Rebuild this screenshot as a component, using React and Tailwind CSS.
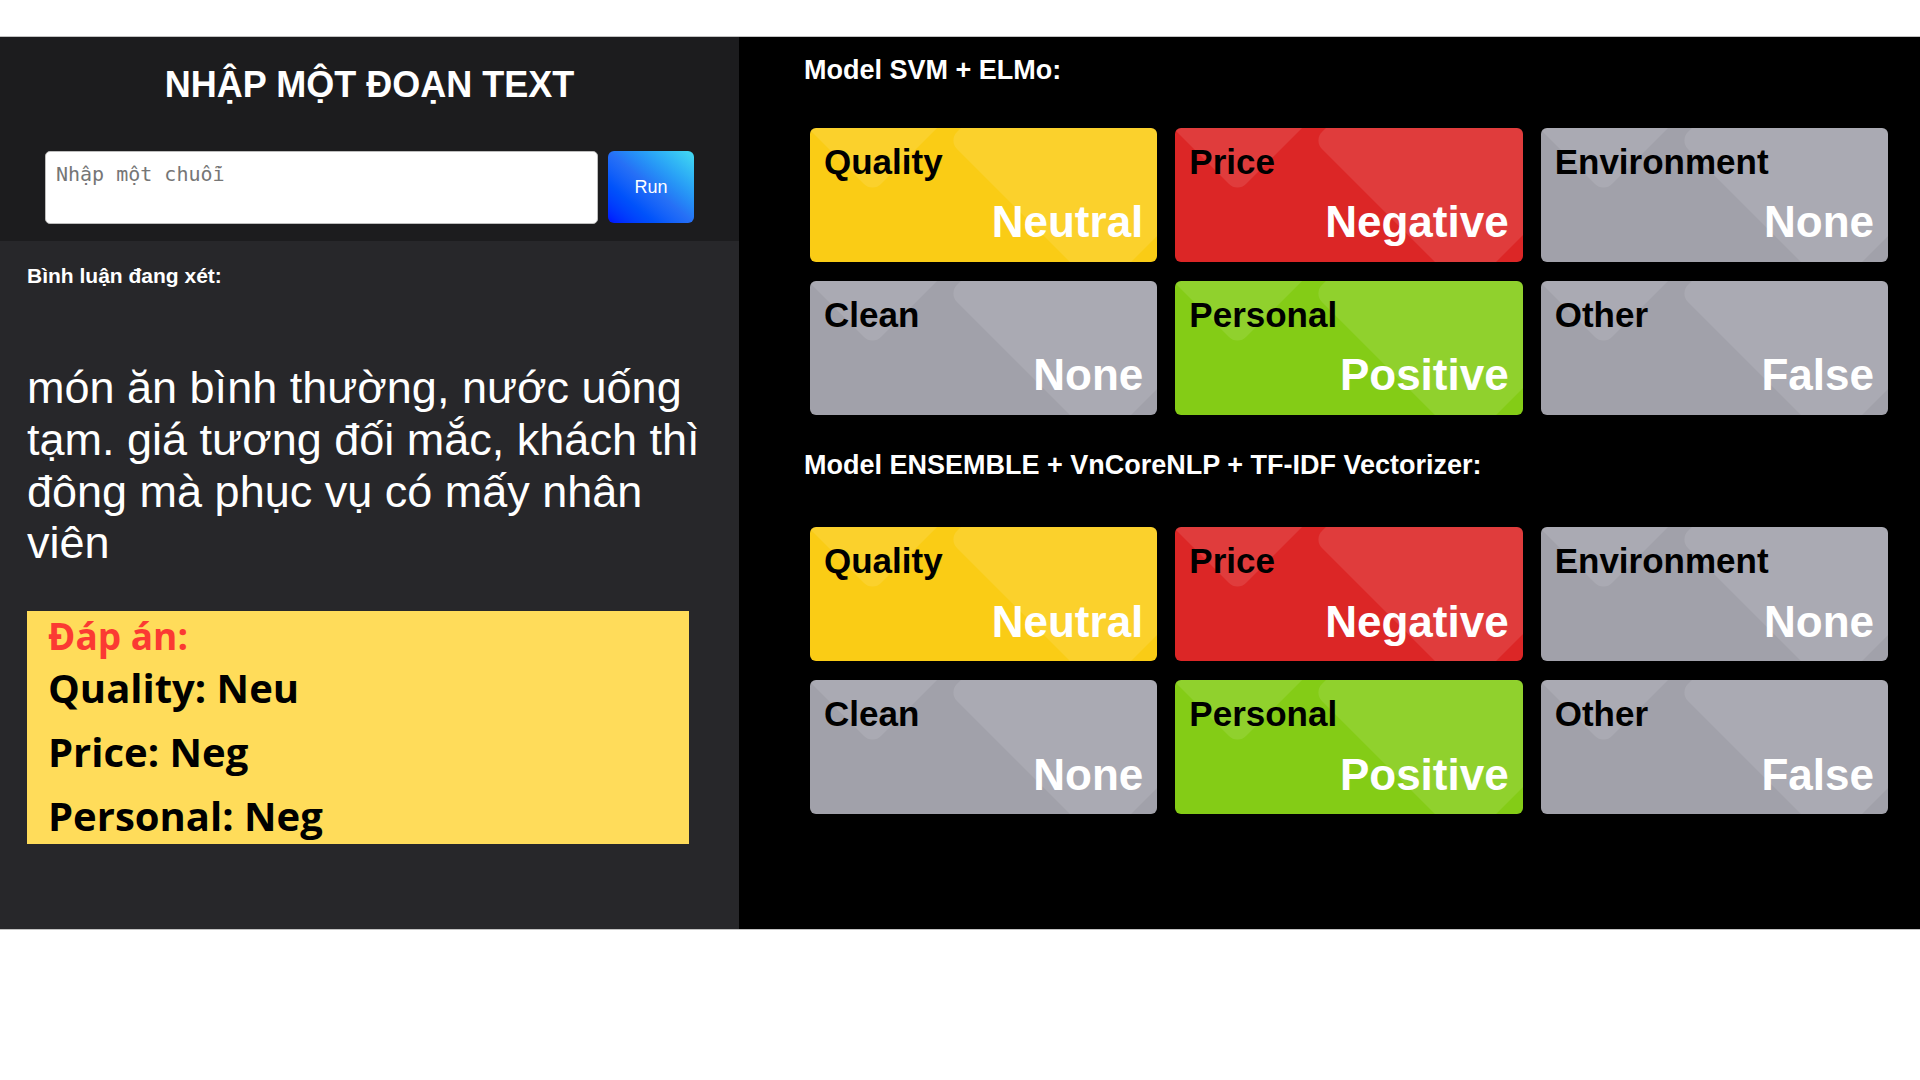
import React from 'react';

const COLORS = {
  yellow: 'bg-[#facc15]',
  red: 'bg-[#dc2626]',
  green: 'bg-[#84cc16]',
  gray: 'bg-[#a1a1aa]',
};

const results = [
  { label: 'Quality', value: 'Neutral', color: 'yellow' },
  { label: 'Price', value: 'Negative', color: 'red' },
  { label: 'Environment', value: 'None', color: 'gray' },
  { label: 'Clean', value: 'None', color: 'gray' },
  { label: 'Personal', value: 'Positive', color: 'green' },
  { label: 'Other', value: 'False', color: 'gray' },
];

function ResultCard({ label, value, color }) {
  return (
    <div className={`relative h-[134px] overflow-hidden rounded-[6px] ${COLORS[color]}`}>
      {/* decorative diamonds */}
      <div className="absolute left-[-45px] top-[-195px] h-[215px] w-[215px] rotate-45 rounded-[12px] bg-white/10"></div>
      <div className="absolute left-[183px] top-[-95px] h-[215px] w-[215px] rotate-45 rounded-[12px] bg-white/10"></div>
      <div className="relative flex h-full flex-col justify-between p-[14px]">
        <div className="text-[35px] font-bold text-black">{label}</div>
        <div className="text-right text-[44px] font-bold text-white">{value}</div>
      </div>
    </div>
  );
}

function ModelBlock({ title, className, gridClass }) {
  return (
    <div className={className}>
      <h3 className="ml-[65px] text-[27px] font-bold text-white">{title}</h3>
      <div className={`ml-[71px] mr-[32px] grid grid-cols-3 gap-x-[18px] gap-y-[19px] ${gridClass}`}>
        {results.map((r) => (
          <ResultCard key={r.label} {...r} />
        ))}
      </div>
    </div>
  );
}

export default function App() {
  return (
    <div className="min-h-screen bg-white pt-[36px] font-['Liberation_Sans',Arial,sans-serif] leading-[1.15]">
      <div className="flex h-[894px] border-y border-[#c2c2c2]">
        {/* Left panel */}
        <div className="flex w-[739px] flex-col">
          <div className="h-[204px] bg-[#1c1c1e] pt-[27px]">
            <h1 className="text-center text-[36px] font-bold text-white">NHẬP MỘT ĐOẠN TEXT</h1>
            <div className="mt-[46px] flex gap-[10px] px-[45px]">
              <textarea
                placeholder="Nhập một chuỗi"
                className="h-[73px] flex-1 resize-none rounded-[5px] border border-[#bdbdbd] bg-white px-[10px] pt-[11px] font-['DejaVu_Sans_Mono',monospace] text-[20px] text-black outline-none placeholder:text-[#767676]"
              ></textarea>
              <button className="h-[72px] w-[86px] rounded-[6px] bg-linear-to-tr from-[#0008ff] via-[#2670f6] to-[#45dcf1] text-[18px] text-white">
                Run
              </button>
            </div>
          </div>
          <div className="flex-1 bg-[#27272a] px-[27px] pt-[23px]">
            <div className="text-[21px] font-bold text-white">Bình luận đang xét:</div>
            <p className="mt-[74px] text-[45px] text-white">
              món ăn bình thường, nước uống tạm. giá tương đối mắc, khách thì đông mà phục vụ có mấy nhân viên
            </p>
            <div className="mt-[42px] h-[233px] w-[662px] bg-[#ffdc5a] pl-[21px] pt-[5px] font-['Open_Sans',sans-serif] font-bold">
              <div className="text-[37px] leading-[40px] text-[#fb3a33]">Đáp án:</div>
              <div className="text-[40px] leading-[64px] text-black">Quality: Neu</div>
              <div className="text-[40px] leading-[64px] text-black">Price: Neg</div>
              <div className="text-[40px] leading-[64px] text-black">Personal: Neg</div>
            </div>
          </div>
        </div>

        {/* Right panel */}
        <div className="flex-1 bg-black pt-[18px]">
          <ModelBlock title="Model SVM + ELMo:" gridClass="mt-[42px]" />
          <ModelBlock
            title="Model ENSEMBLE + VnCoreNLP + TF-IDF Vectorizer:"
            className="mt-[35px]"
            gridClass="mt-[46px]"
          />
        </div>
      </div>
    </div>
  );
}
